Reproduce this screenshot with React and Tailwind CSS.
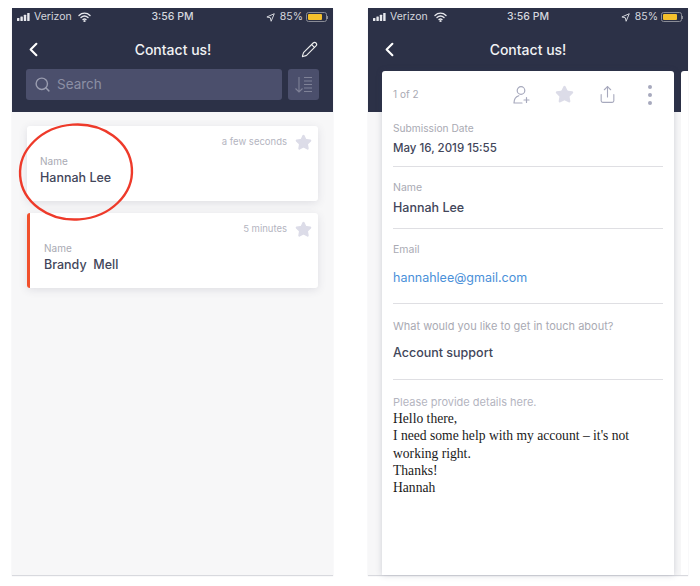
import { ChevronLeft, Pencil, Search, Share, Star } from 'lucide-react'

const FONT = "font-['Inter','Liberation_Sans',sans-serif]"

const StatusBar = ({ pad }) => (
  <div className={`flex items-center justify-between h-[18px] text-[10.5px] leading-none text-[#d5d7de] ${pad}`}>
    <div className="flex items-center w-[100px] gap-[3px]">
      <svg width="14" height="8" viewBox="0 0 14 8" fill="#e8e9ee">
        <rect x="0" y="5" width="2.4" height="3" rx="0.5" />
        <rect x="3.4" y="3.5" width="2.4" height="4.5" rx="0.5" />
        <rect x="6.8" y="1.8" width="2.4" height="6.2" rx="0.5" />
        <rect x="10.2" y="0" width="2.4" height="8" rx="0.5" />
      </svg>
      <span>Verizon</span>
      <svg className="ml-[3px]" width="13" height="10" viewBox="0 0 13 10" fill="none" stroke="#e8e9ee" strokeWidth="1.4" strokeLinecap="round">
        <path d="M1 3.4c3.2-3 7.8-3 11 0" />
        <path d="M3 5.600c2.100-1.900 4.900-1.900 7 0" />
        <path d="M5 7.600c.9-.8 2.100-.8 3 0" />
        <circle cx="6.5" cy="9" r="0.4" fill="#e8e9ee" />
      </svg>
    </div>
    <span className="font-medium">3:56 PM</span>
    <div className="flex items-center justify-end w-[100px] gap-[3px]">
      <svg className="mr-[2px]" width="9" height="9" viewBox="0 0 10 10" fill="none" stroke="#d5d7de" strokeWidth="1.1" strokeLinejoin="round">
        <path d="M9.2.8 1 4.400l3.800.9.9 3.900z" />
      </svg>
      <span>85%</span>
      <div className="flex items-center">
        <div className="w-[21px] h-[10px] rounded-[2.5px] border border-[#8a8c96] p-[1px]">
          <div className="w-[85%] h-full rounded-[1px] bg-[#f5c02c]" />
        </div>
        <div className="w-[1px] h-[3px] bg-[#8a8c96]" />
      </div>
    </div>
  </div>
)

const SortIcon = () => (
  <svg width="19" height="19" viewBox="0 0 19 19" fill="none" stroke="#7f8297" strokeWidth="1.1">
    <path d="M5 2v15M1.500 13.500 5 17l3.500-3.500" />
    <path d="M10 2.500h8M10 6h8M10 9.500h8M10 13h8M10 16.500h8" />
  </svg>
)

const AddUserIcon = () => (
  <svg width="20" height="20" viewBox="0 0 20 20" fill="none" stroke="#a7a9bd" strokeWidth="1.2" strokeLinecap="round">
    <circle cx="9" cy="5.500" r="3.800" />
    <path d="M2 18c0-4 2.200-6.500 4.800-7.300M2 18h8" />
    <path d="M14.500 12.500v5M12 15h5" />
  </svg>
)

const ListCard = ({ time, name, accent }) => (
  <div className={`h-[75px] rounded-[3px] bg-white shadow-[0_2px_8px_rgba(60,65,90,0.13)] ${accent ? 'border-l-[3px] border-[#f1502c] pl-[14px]' : 'pl-[13px]'}`}>
    <div className="flex items-center justify-end h-[33px] pr-[6px] gap-[8px]">
      <span className="text-[9.5px] text-[#b4b5bf]">{time}</span>
      <Star size={17} fill="#dcdce8" stroke="#dcdce8" />
    </div>
    <div className="-mt-[4px]">
      <div className="text-[10px] leading-[13px] text-[#a9aab3]">Name</div>
      <div className="mt-[2px] text-[12.5px] leading-[16px] font-medium text-[#42465a] whitespace-pre">{name}</div>
    </div>
  </div>
)

const Field = ({ label, value, labelClass = 'text-[10.5px]', valueClass = 'text-[12.5px] font-medium text-[#42465a]', height, gap }) => (
  <div className="border-b border-[#dfdfe3]" style={{ height }}>
    <div className={`leading-[14px] text-[#a9aab3] ${labelClass}`}>{label}</div>
    <div className={`leading-[16px] ${valueClass}`} style={{ marginTop: gap }}>{value}</div>
  </div>
)

const App = () => {
  return (
    <div className={`flex w-[700px] h-[586px] bg-white pl-[12px] pt-[8px] gap-[35px] overflow-hidden ${FONT}`}>

      {/* list screen */}
      <div className="relative flex flex-col w-[321px] h-[567px] bg-[#f7f7f8] shadow-[0_1px_1px_rgba(60,65,90,0.2)]">
        <div className="flex flex-col h-[104px] bg-[#2c3147]">
          <StatusBar pad="px-[5px]" />
          <div className="flex items-center justify-between h-[46px] pl-[10px] pr-[15px]">
            <ChevronLeft size={23} color="#fff" strokeWidth={2.2} />
            <span className="text-[14px] font-medium text-[#f1f1f4]">Contact us!</span>
            <Pencil size={17} color="#eceded" strokeWidth={1.6} />
          </div>
          <div className="flex gap-[6px] pl-[14px] pr-[14px] -mt-[3px]">
            <div className="flex items-center flex-1 h-[31px] rounded-[3px] bg-[#4b4f6c] pl-[8px] gap-[6px]">
              <Search size={17} color="#9a9db0" strokeWidth={2} />
              <span className="text-[13.5px] text-[#8c8fa5]">Search</span>
            </div>
            <div className="flex items-center justify-center w-[31px] h-[31px] rounded-[3px] bg-[#4b4f6c]">
              <SortIcon />
            </div>
          </div>
        </div>
        <div className="flex flex-col gap-[12px] pt-[14px] pl-[15px] pr-[15px]">
          <ListCard time="a few seconds" name="Hannah Lee" />
          <ListCard time="5 minutes" name="Brandy  Mell" accent />
        </div>
        {/* hand-drawn red circle */}
        <svg className="absolute left-[5px] top-[112px]" width="130" height="106" viewBox="0 0 130 106" fill="none">
          <ellipse cx="59" cy="52" rx="56" ry="47.5" stroke="#ee3a2a" strokeWidth="2.4" transform="rotate(-4 59 52)" />
        </svg>
      </div>

      {/* detail screen */}
      <div className="flex flex-col w-[320px] h-[567px] bg-[#f7f7f8] shadow-[0_1px_1px_rgba(60,65,90,0.2)]">
        <div className="flex flex-col h-[104px] bg-[#2c3147]">
          <StatusBar pad="pl-[5px] pr-[5px]" />
          <div className="flex items-center justify-center relative h-[46px]">
            <ChevronLeft size={23} color="#fff" strokeWidth={2.2} className="absolute left-[10px]" />
            <span className="text-[14px] font-medium text-[#f1f1f4]">Contact us!</span>
          </div>
        </div>
        <div className="relative z-10 flex flex-1 gap-[7px] pl-[14px] -mt-[41px]">
          <div className="flex flex-col w-[292px] h-[504px] rounded-t-[3px] bg-white shadow-[0_0_6px_rgba(60,65,90,0.22)] px-[11px]">
            <div className="flex items-center h-[47px] mb-[3px] shrink-0">
              <span className="text-[10px] text-[#a9aab3] w-[119px]">1 of 2</span>
              <AddUserIcon />
              <Star size={19} fill="#dcdce8" stroke="#dcdce8" className="ml-[23px]" />
              <Share size={19} color="#a7a9bd" strokeWidth={1.4} className="ml-[24px]" />
              <div className="ml-[31px] flex flex-col gap-[4px]">
                <span className="w-[4px] h-[4px] rounded-full bg-[#a7a9bd]" />
                <span className="w-[4px] h-[4px] rounded-full bg-[#a7a9bd]" />
                <span className="w-[4px] h-[4px] rounded-full bg-[#a7a9bd]" />
              </div>
            </div>
            <Field label="Submission Date" value="May 16, 2019 15:55" labelClass="text-[10.2px]" valueClass="text-[11.5px] font-medium text-[#42465a]" height={46} gap={5} />
            <div className="h-[14px] shrink-0" />
            <Field label="Name" value="Hannah Lee" height={48} gap={5} />
            <div className="h-[14px] shrink-0" />
            <Field label="Email" value="hannahlee@gmail.com" valueClass="text-[12.5px] text-[#4a90d9]" height={61} gap={13} />
            <div className="h-[15px] shrink-0" />
            <Field label="What would you like to get in touch about?" labelClass="text-[11px]" value="Account support" height={61} gap={12} />
            <div className="h-[15px] shrink-0" />
            <div className="text-[11px] leading-[14px] text-[#b4b5bf]">Please provide details here.</div>
            <div className="mt-[1px] font-['Liberation_Serif',serif] text-[13.6px] leading-[17.3px] text-[#1a1a1a]">
              <div>Hello there,</div>
              <div>I need some help with my account – it's not</div>
              <div>working right.</div>
              <div>Thanks!</div>
              <div>Hannah</div>
            </div>
          </div>
          <div className="flex-1 h-[504px] rounded-tl-[3px] bg-white" />
        </div>
      </div>
    </div>
  )
}

export default App
